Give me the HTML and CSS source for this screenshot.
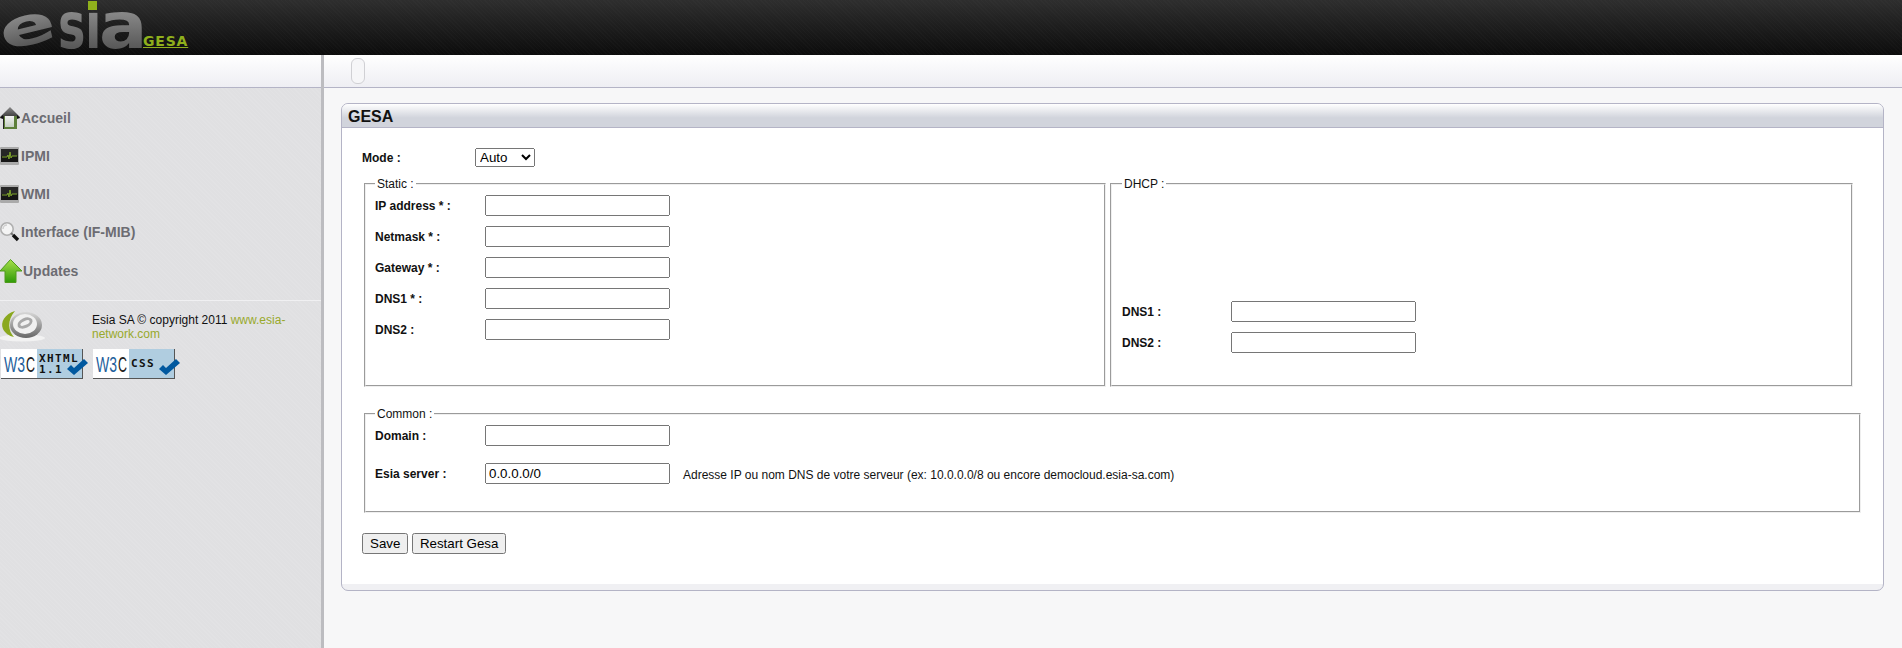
FILE: index.html
```html
<!DOCTYPE html>
<html lang="en">
<head>
  <meta charset="UTF-8">
  <meta name="viewport" content="width=device-width, initial-scale=1.0">
  <title>GESA</title>
  <link rel="stylesheet" href="styles.css">
</head>
<body>
  <header class="header">
    <svg class="logo" width="144" height="55" viewBox="0 0 144 55">
      <defs>
        <linearGradient id="logoFill" x1="0" y1="0" x2="0" y2="1">
          <stop offset="0" stop-color="#a8a8a8"/>
          <stop offset="1" stop-color="#444444"/>
        </linearGradient>
      </defs>
      <text class="logo-letter" transform="translate(4 51) rotate(-14) scale(1.3 0.82)" font-size="64" fill="url(#logoFill)">e</text>
      <text class="logo-letter" transform="translate(58 48) scale(0.72 1)" font-size="64" fill="url(#logoFill)">s</text>
      <text class="logo-letter" transform="translate(85 48) scale(0.75 1)" font-size="64" fill="url(#logoFill)">ı</text>
      <text class="logo-letter" transform="translate(99 48) scale(1.12 1)" font-size="64" fill="url(#logoFill)">a</text>
      <rect x="88" y="1" width="9" height="9" fill="#8fb01c"/>
    </svg>
    <a class="app-link" href="#">GESA</a>
  </header>

  <div class="layout">
    <aside class="sidebar">
      <div class="toolbar"></div>
      <nav class="nav">
        <a class="nav-item" href="#">
          <svg width="20" height="22" viewBox="0 0 20 22">
            <defs>
              <linearGradient id="roofFill" x1="0" y1="0" x2="0" y2="1">
                <stop offset="0" stop-color="#8a8a8a"/>
                <stop offset="1" stop-color="#333"/>
              </linearGradient>
              <linearGradient id="doorFill" x1="0" y1="0" x2="0" y2="1">
                <stop offset="0" stop-color="#f2f2f2"/>
                <stop offset="1" stop-color="#c4cfc0"/>
              </linearGradient>
            </defs>
            <rect x="3" y="7" width="14" height="15" fill="#5d7f3a"/>
            <rect x="5" y="9" width="9" height="11" fill="url(#doorFill)"/>
            <rect x="3" y="7" width="1" height="15" fill="#222"/>
            <path d="M10 0 L20 10 L20 11 L16 9 L4 9 L0 11 L0 10 Z" fill="url(#roofFill)"/>
            <path d="M0 11 L3 8 L3 12 Z M20 11 L17 8 L17 12 Z" fill="#111"/>
          </svg>
          <span>Accueil</span>
        </a>
        <a class="nav-item" href="#">
          <svg width="20" height="18" viewBox="0 0 20 18">
            <rect x="0" y="0" width="19" height="18" rx="1" fill="#aaa"/>
            <rect x="1" y="2" width="17" height="13" fill="#262626"/>
            <rect x="1" y="9" width="17" height="6" fill="#161616"/>
            <path d="M2 10 L7 10 L8 8 L9 12 L10 5 L11 11 L12 9 L17 9" fill="none" stroke="#7fa52c" stroke-width="1"/>
          </svg>
          <span>IPMI</span>
        </a>
        <a class="nav-item" href="#">
          <svg width="20" height="18" viewBox="0 0 20 18">
            <rect x="0" y="0" width="19" height="18" rx="1" fill="#aaa"/>
            <rect x="1" y="2" width="17" height="13" fill="#262626"/>
            <rect x="1" y="9" width="17" height="6" fill="#161616"/>
            <path d="M2 10 L7 10 L8 8 L9 12 L10 5 L11 11 L12 9 L17 9" fill="none" stroke="#7fa52c" stroke-width="1"/>
          </svg>
          <span>WMI</span>
        </a>
        <a class="nav-item" href="#">
          <svg width="20" height="20" viewBox="0 0 20 20">
            <circle cx="7" cy="7" r="6.2" fill="#f4f4f4" stroke="#b0b0b0" stroke-width="1.6"/>
            <path d="M3 7 A4 4 0 0 1 7 3" fill="none" stroke="#cfcfcf" stroke-width="1.5"/>
            <path d="M11 11 L13 13" stroke="#777" stroke-width="2"/>
            <path d="M13 13 L18 18" stroke="#111" stroke-width="3.4"/>
          </svg>
          <span>Interface (IF-MIB)</span>
        </a>
        <a class="nav-item nav-item-wide" href="#">
          <svg width="23" height="24" viewBox="0 0 23 24">
            <defs>
              <linearGradient id="arrowFill" x1="0" y1="0" x2="0" y2="1">
                <stop offset="0" stop-color="#a8e04a"/>
                <stop offset="1" stop-color="#2f9a08"/>
              </linearGradient>
            </defs>
            <path d="M10.5 0.5 L22 12 L16 12 L16 23.5 L5 23.5 L5 12 L0 12 Z" fill="url(#arrowFill)" stroke="#4f9a1c"/>
          </svg>
          <span>Updates</span>
        </a>
      </nav>
      <div class="credits">
        <div class="credits-top">
          <svg class="emblem" width="46" height="32" viewBox="0 0 46 32">
            <defs>
              <linearGradient id="ringFill" x1="0" y1="0" x2="0" y2="1">
                <stop offset="0" stop-color="#d8d8d8"/>
                <stop offset="1" stop-color="#666"/>
              </linearGradient>
            </defs>
            <ellipse cx="22" cy="28" rx="23" ry="3.5" fill="#f2f2f2"/>
            <ellipse cx="26" cy="15" rx="16" ry="13" fill="url(#ringFill)"/>
            <path d="M15 1 C5 4 0 12 3 19 C5 23 9 26 14 27 C8 21 7 10 15 1 Z" fill="#8aa81e"/>
            <ellipse cx="25" cy="14" rx="12" ry="10" fill="#f0f0f0"/>
            <ellipse cx="25" cy="13" rx="8" ry="5" fill="#a8a8a8" transform="rotate(-25 25 13)"/>
            <ellipse cx="25" cy="13" rx="5" ry="2" fill="#f0f0f0" transform="rotate(-25 25 13)"/>
          </svg>
          <p class="credits-text">Esia SA © copyright 2011 <a href="#">www.esia-network.com</a></p>
        </div>
        <div class="badges">
          <svg width="88" height="32" viewBox="0 0 88 32">
            <rect x="1" y="0" width="82" height="30" fill="#555"/>
            <rect x="1" y="0" width="81" height="29" fill="#b0cde0"/>
            <rect x="1" y="0" width="36" height="29" fill="#fff"/>
            <text class="badge-w3" x="4" y="23" fill="#1f5f9c" textLength="21" lengthAdjust="spacingAndGlyphs">W3</text>
            <text class="badge-w3" x="26" y="23" fill="#222" textLength="9" lengthAdjust="spacingAndGlyphs">C</text>
            <text class="badge-label" x="39" y="13">XHTML</text>
            <text class="badge-label" x="39" y="24">1.1</text>
            <path d="M67 20 L71 16 L74 19 L84 10 L88 14 L74 26 Z" fill="#00589f"/>
          </svg>
          <svg width="88" height="32" viewBox="0 0 88 32">
            <rect x="1" y="0" width="82" height="30" fill="#555"/>
            <rect x="1" y="0" width="81" height="29" fill="#b0cde0"/>
            <rect x="1" y="0" width="36" height="29" fill="#fff"/>
            <text class="badge-w3" x="4" y="23" fill="#1f5f9c" textLength="21" lengthAdjust="spacingAndGlyphs">W3</text>
            <text class="badge-w3" x="26" y="23" fill="#222" textLength="9" lengthAdjust="spacingAndGlyphs">C</text>
            <text class="badge-label" x="39" y="18">CSS</text>
            <path d="M67 20 L71 16 L74 19 L84 10 L88 14 L74 26 Z" fill="#00589f"/>
          </svg>
        </div>
      </div>
    </aside>

    <main class="main">
      <div class="toolbar toolbar-main">
        <span class="handle"></span>
      </div>
      <section class="panel">
        <h1 class="panel-title">GESA</h1>
        <form class="panel-body">
          <div class="mode-row">
            <label class="field-label">Mode :</label>
            <select class="mode-select">
              <option>Auto</option>
              <option>Static</option>
              <option>DHCP</option>
            </select>
          </div>

          <div class="network-row">
            <fieldset class="box box-static">
              <legend>Static :</legend>
              <div class="field-grid">
                <label class="field-label">IP address * :</label><input type="text">
                <label class="field-label">Netmask * :</label><input type="text">
                <label class="field-label">Gateway * :</label><input type="text">
                <label class="field-label">DNS1 * :</label><input type="text">
                <label class="field-label">DNS2 :</label><input type="text">
              </div>
            </fieldset>
            <fieldset class="box box-dhcp">
              <legend>DHCP :</legend>
              <div class="field-grid">
                <label class="field-label">DNS1 :</label><input type="text">
                <label class="field-label">DNS2 :</label><input type="text">
              </div>
            </fieldset>
          </div>

          <fieldset class="box box-common">
            <legend>Common :</legend>
            <div class="field-grid field-grid-loose">
              <label class="field-label">Domain :</label><input type="text">
              <span></span>
              <label class="field-label">Esia server :</label><input type="text" value="0.0.0.0/0">
              <span class="hint">Adresse IP ou nom DNS de votre serveur (ex: 10.0.0.0/8 ou encore democloud.esia-sa.com)</span>
            </div>
          </fieldset>

          <div class="actions">
            <button type="button">Save</button>
            <button type="button" class="restart">Restart Gesa</button>
          </div>
        </form>
      </section>
    </main>
  </div>
</body>
</html>
```

FILE: styles.css
```css
html, body {
  height: 100%;
}

body {
  margin: 0;
  display: flex;
  flex-direction: column;
  overflow: hidden;
  font-family: "Liberation Sans", Arial, sans-serif;
  font-size: 12px;
  color: #111;
  background-color: #f7f7f8;
}

.header {
  height: 55px;
  flex: none;
  display: flex;
  align-items: flex-start;
  background-color: #161616;
  background-image:
    repeating-linear-gradient(45deg, rgba(255, 255, 255, 0.015) 0 1px, transparent 1px 3px),
    linear-gradient(#2e2e2e, #0c0c0c);
}

.logo {
  overflow: visible;
}

.logo-letter {
  font-family: "DejaVu Sans", sans-serif;
  font-weight: bold;
}

.app-link {
  margin: 34px 0 0 -1px;
  height: 14px;
  font-family: "DejaVu Sans", sans-serif;
  font-size: 14px;
  font-weight: bold;
  line-height: 14px;
  letter-spacing: 0.8px;
  color: #8fb01c;
}

.layout {
  flex: 1;
  display: grid;
  grid-template-columns: 324px 1fr;
  min-height: 0;
}

.toolbar {
  height: 32px;
  background: linear-gradient(#ffffff, #eeeef3);
  border-bottom: 1px solid #b4b4c6;
}

.toolbar-main {
  display: flex;
  align-items: center;
}

.handle {
  width: 12px;
  height: 24px;
  margin-left: 27px;
  border: 1px solid #d0d0d4;
  border-radius: 6px;
  background-color: #f6f6f8;
}

.sidebar {
  background-color: #e0e0e2;
  background-image: repeating-linear-gradient(45deg, rgba(255, 255, 255, 0.08) 0 1px, transparent 1px 3px);
  border-right: 3px solid #bcbcc0;
}

.nav {
  padding-top: 11px;
}

.nav-item {
  height: 38px;
  display: flex;
  align-items: center;
  gap: 1px;
  font-size: 14px;
  font-weight: bold;
  color: #6c6c72;
  text-decoration: none;
}

.nav-item svg {
  flex: none;
}

.nav-item-wide {
  height: 36px;
  padding-top: 2px;
  gap: 0;
}

.credits {
  margin-top: 11px;
  padding-top: 9px;
  border-top: 1px solid #f0f0f2;
}

.credits-top {
  display: flex;
  height: 39px;
}

.emblem {
  flex: none;
}

.credits-text {
  width: 205px;
  margin: 3px 0 0 46px;
  line-height: 14px;
}

.credits-text a {
  color: #98a92c;
  text-decoration: none;
}

.badges {
  display: flex;
  gap: 4px;
}

.badges svg {
  display: block;
}

.badge-w3 {
  font-family: "Liberation Sans", sans-serif;
  font-size: 22px;
}

.badge-label {
  font-family: "DejaVu Sans Mono", monospace;
  font-size: 11px;
  font-weight: bold;
  letter-spacing: 1.4px;
  fill: #111;
}

.main {
  min-width: 0;
}

.panel {
  margin: 15px 18px 0 17px;
  border: 1px solid #b4b4c6;
  border-radius: 7px;
  background-color: #f0f0f3;
  padding-bottom: 6px;
}

.panel-title {
  margin: 0;
  height: 23px;
  padding-left: 6px;
  font-size: 16px;
  line-height: 25px;
  border-radius: 6px 6px 0 0;
  border-bottom: 1px solid #b4b4c6;
  background: linear-gradient(#ffffff, #d1d4dc 60%);
}

.panel-body {
  padding: 20px 22px 30px 20px;
  background-color: #ffffff;
}

.mode-row {
  display: flex;
  align-items: center;
  height: 19px;
  margin-bottom: 10px;
}

.mode-row .field-label {
  width: 113px;
}

.mode-select {
  width: 60px;
  height: 19px;
  font-family: "Liberation Sans", Arial, sans-serif;
  font-size: 13.33px;
}

.field-label {
  font-weight: bold;
}

.network-row {
  display: flex;
  gap: 4px;
  margin-left: 2px;
  margin-bottom: 20px;
}

.box {
  margin: 0;
  min-width: 0;
  padding: 4px 9px 0;
  box-sizing: border-box;
  font-size: 12px;
}

.box legend {
  padding: 0 2px;
  line-height: 14px;
}

.box-static {
  width: 742px;
  padding-bottom: 45px;
}

.box-dhcp {
  width: 743px;
  padding-top: 110px;
  padding-left: 10px;
}

.box-common {
  margin: 0 0 20px 2px;
  padding-top: 4px;
  padding-bottom: 27px;
}

.field-grid {
  display: grid;
  grid-template-columns: 110px 185px;
  row-gap: 10px;
  align-items: center;
}

.box-dhcp .field-grid {
  grid-template-columns: 109px 185px;
}

.field-grid-loose {
  grid-template-columns: 110px 185px 1fr;
  row-gap: 17px;
}

.field-grid input {
  width: 100%;
  height: 21px;
  box-sizing: border-box;
  font-family: "Liberation Sans", Arial, sans-serif;
  font-size: 13.33px;
}

.hint {
  margin: 2px 0 0 13px;
}

.actions {
  display: flex;
  gap: 4px;
}

.actions button {
  font-family: "Liberation Sans", Arial, sans-serif;
  font-size: 13.33px;
  height: 21px;
}

.actions .restart {
  padding: 1px 5.5px;
}
```
